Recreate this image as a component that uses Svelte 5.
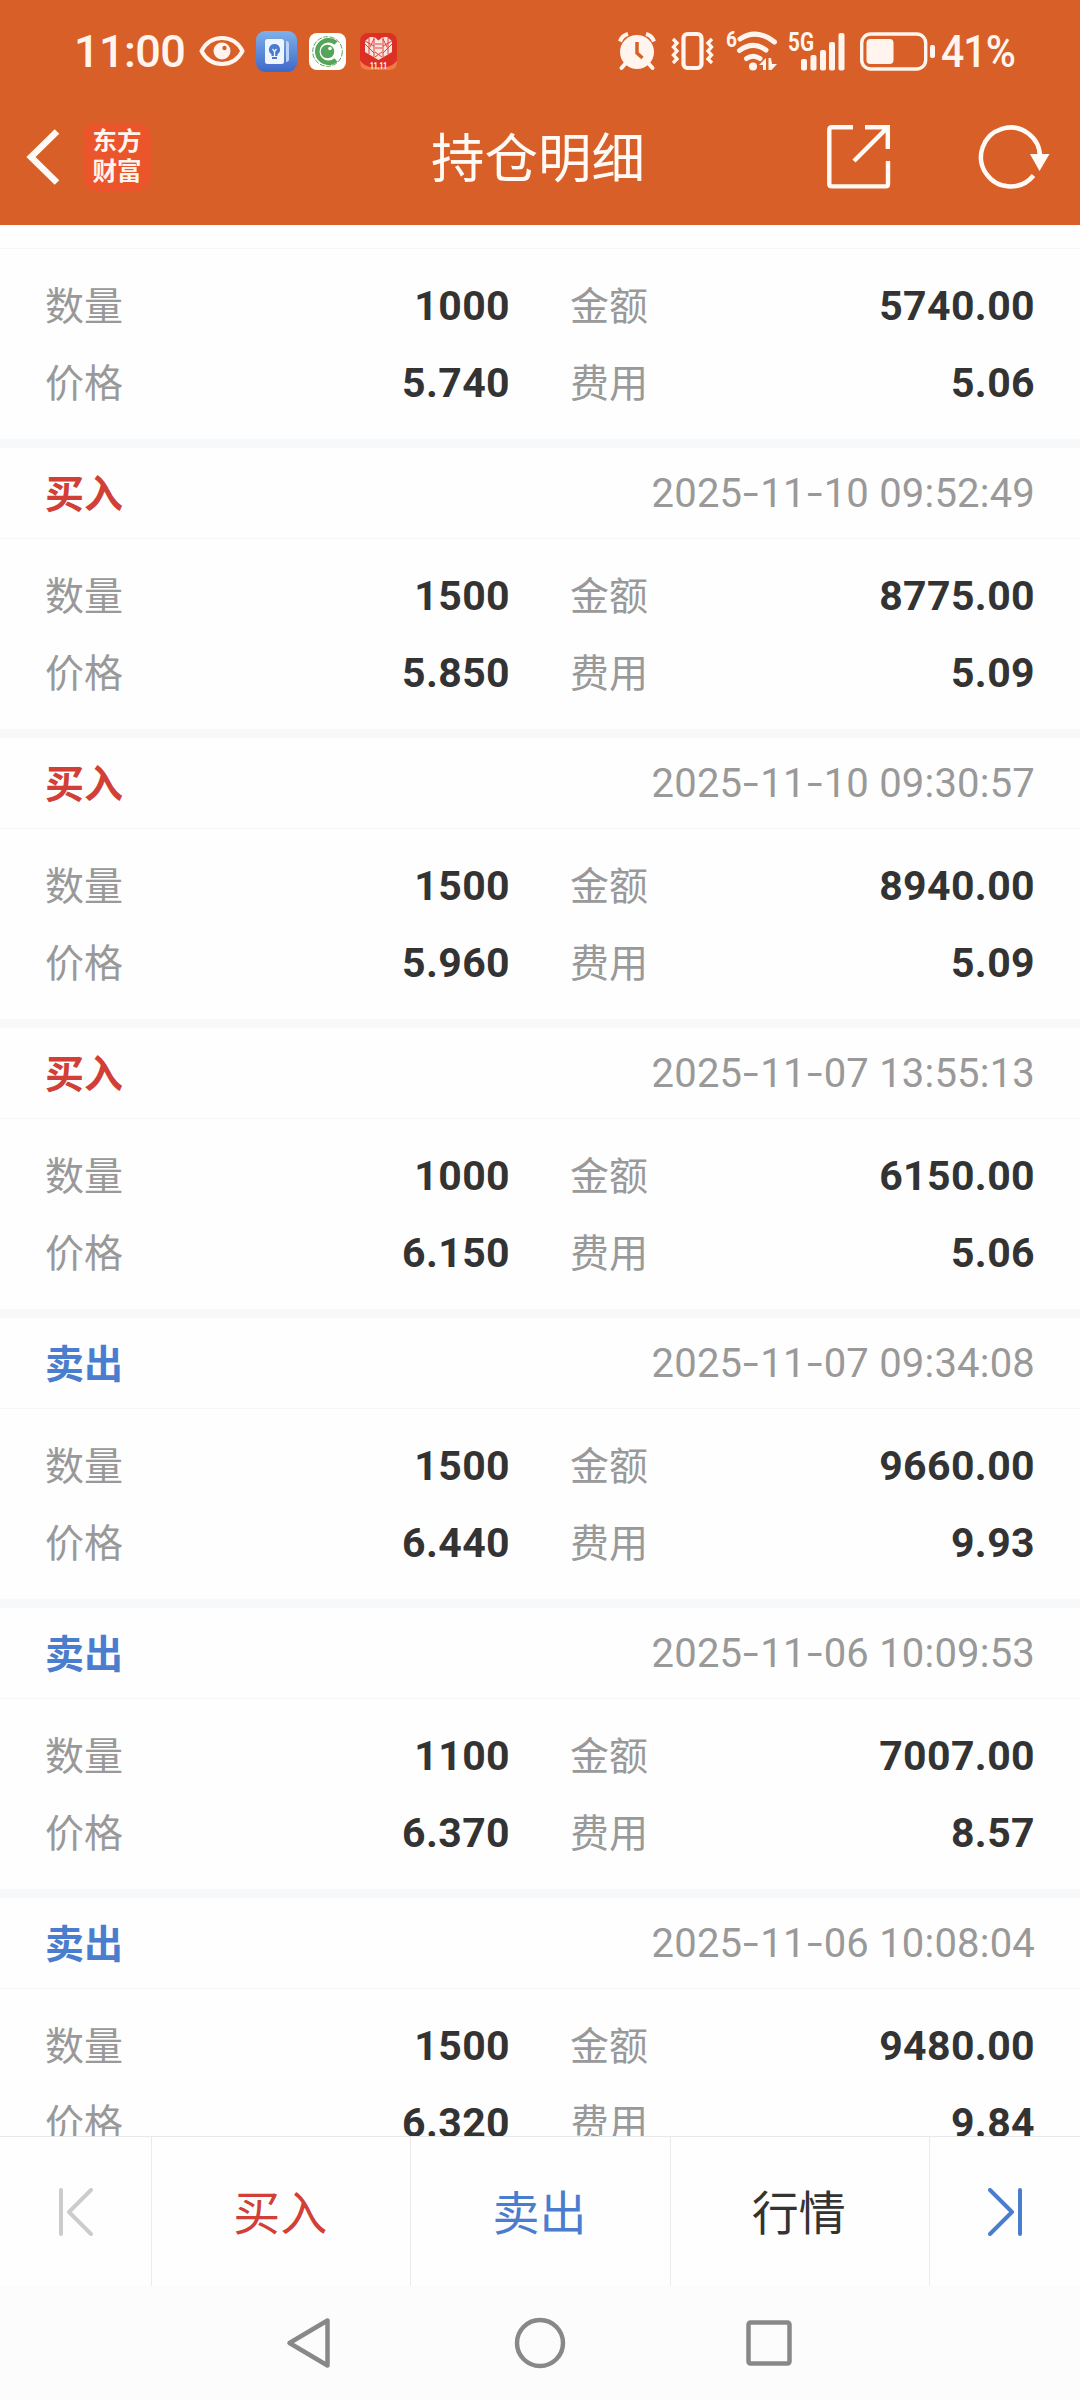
<script lang="ts">
	type Trade = {
		side?: 'buy' | 'sell';
		time?: string;
		count: string;
		amount: string;
		price: string;
		fee: string;
	};

	// the first entry is scrolled past its heading
	const trades: Trade[] = [
		{ count: '1000', amount: '5740.00', price: '5.740', fee: '5.06' },
		{ side: 'buy', time: '2025-11-10 09:52:49', count: '1500', amount: '8775.00', price: '5.850', fee: '5.09' },
		{ side: 'buy', time: '2025-11-10 09:30:57', count: '1500', amount: '8940.00', price: '5.960', fee: '5.09' },
		{ side: 'buy', time: '2025-11-07 13:55:13', count: '1000', amount: '6150.00', price: '6.150', fee: '5.06' },
		{ side: 'sell', time: '2025-11-07 09:34:08', count: '1500', amount: '9660.00', price: '6.440', fee: '9.93' },
		{ side: 'sell', time: '2025-11-06 10:09:53', count: '1100', amount: '7007.00', price: '6.370', fee: '8.57' },
		{ side: 'sell', time: '2025-11-06 10:08:04', count: '1500', amount: '9480.00', price: '6.320', fee: '9.84' }
	];

	const sideLabel = { buy: '买入', sell: '卖出' };
</script>

{#snippet field(label: string, value: string)}
	<div class="field">
		<span class="label">{label}</span>
		<span class="value">{value}</span>
	</div>
{/snippet}

<div class="screen">
	<header>
		<div class="status">
			<div class="status-left">
				<span class="clock">11:00</span>
				<svg class="eye" width="46" height="32" viewBox="0 0 46 32" fill="none">
					<path d="M2.500 16C7 7.500 14.500 3 23 3s16 4.500 20.500 13C39 24.500 31.500 29 23 29S7 24.500 2.500 16Z" stroke="#fff5ee" stroke-width="4" stroke-linejoin="round" />
					<circle cx="23" cy="16" r="8.500" fill="#fff5ee" />
					<circle cx="25.500" cy="13" r="2.200" fill="#d86028" />
				</svg>
				<svg class="app-tip" width="41" height="41" viewBox="0 0 41 41">
					<defs>
						<linearGradient id="tip" x1="0" y1="0" x2="0" y2="1">
							<stop offset="0" stop-color="#7fb0ea" />
							<stop offset="1" stop-color="#3f68c8" />
						</linearGradient>
					</defs>
					<rect width="41" height="41" rx="9" fill="url(#tip)" />
					<path d="M30 10q3 0 3 3v15q0 3-3 3Z" fill="#bdd3f5" />
					<rect x="9" y="8" width="19" height="25" rx="2.500" fill="#eef5ff" />
					<path d="M18.500 13a5.600 5.600 0 0 0-3 10.300V25h6v-1.700A5.600 5.600 0 0 0 18.500 13ZM16 26h5v2h-5Z" fill="#4a7bd0" />
					<path d="M16.500 18l2 2.500 2-2.500M18.500 20.500V25" stroke="#eef5ff" stroke-width="1.300" fill="none" />
				</svg>
				<svg class="app-c" width="37" height="37" viewBox="0 0 37 37" fill="none">
					<rect width="37" height="37" rx="8" fill="#fff" />
					<circle cx="18.500" cy="18.500" r="14.800" stroke="#5aa55c" stroke-width="1" stroke-dasharray="5 1.500" />
					<path d="M27 10a11.300 11.300 0 1 0 0 17" stroke="#55a457" stroke-width="4.500" />
					<circle cx="18.500" cy="18.500" r="6.800" fill="#55a457" />
					<circle cx="21" cy="15.500" r="1.800" fill="#fff" />
				</svg>
				<svg class="app-sale" width="37" height="37" viewBox="0 0 37 37">
					<rect width="37" height="37" rx="8" fill="#dc3025" />
					<path d="M0 27.500q4 5 10 6.500h17q6-1.500 10-6.500V29q0 8-8 8H8q-8 0-8-8Z" fill="#f07a48" />
					<path d="M18.500 27L5 19V8l5-4h4.500l4 3.500 4-3.500H27l5 4v11Z" fill="#fbe4df" />
					<path d="M9 5v16M14 4v20M23 4v20M28 5v16M5 11l9 9M32 11l-9 9M5 8l9 5M32 8l-9 5M15 11h7M15 15h7M10 14l4-8M27 14l-4-8M15 19l7 5M22 19l-7 5" stroke="#dc3025" stroke-width="0.900" />
					<text x="18.500" y="35.500" text-anchor="middle" textLength="17" lengthAdjust="spacingAndGlyphs" class="sale-text">11.11</text>
				</svg>
			</div>
			<div class="status-right">
				<svg class="alarm" width="38" height="38" viewBox="0 0 38 38" fill="none" stroke="#fff5ee">
					<circle cx="19" cy="20" r="17" fill="#fff5ee" stroke="none" />
					<path d="M2 9.500q2-6 8-7.500M36 9.500q-2-6-8-7.500" stroke-width="4" />
					<path d="M7 32l-3.500 4M31 32l3.500 4" stroke-width="4" stroke-linecap="round" />
					<path d="M19 10v11l5.500 5" stroke="#d86028" stroke-width="3.500" />
				</svg>
				<svg class="vibrate" width="43" height="38" viewBox="0 0 43 38" fill="none" stroke="#fff5ee">
					<rect x="12.500" y="2" width="18" height="34" rx="4" stroke-width="4.200" />
					<path d="M2 7l4 4-3.500 4L6 19l-3.500 4L6 27l-4 4M41 7l-4 4 3.500 4-3.500 4 3.500 4-3.500 4 4 4" stroke-width="3.400" />
				</svg>
				<svg class="wifi" width="52" height="40" viewBox="0 0 52 40" fill="none" stroke="#fff5ee">
					<text x="0" y="16" textLength="11" lengthAdjust="spacingAndGlyphs" class="tiny six">6</text>
					<path d="M14 8Q31-3 48.500 11" stroke-width="5" stroke-linecap="round" />
					<path d="M13.500 19.500Q27 9.500 40 19" stroke-width="5" stroke-linecap="round" />
					<path d="M20.500 27.500q6.500-4.500 13.500 0" stroke-width="5" stroke-linecap="round" />
					<circle cx="27" cy="35.500" r="4" fill="#fff5ee" stroke="none" />
					<path d="M33 34l7-7v12h-3v-5ZM42.500 39V27h2.500l1 6h5l-5.500 6Z" fill="#fff5ee" stroke="none" />
				</svg>
				<svg class="signal" width="58" height="39" viewBox="0 0 58 39" fill="#fff5ee">
					<text x="0" y="18.500" textLength="26" lengthAdjust="spacingAndGlyphs" class="tiny">5G</text>
					<rect x="13" y="27" width="6" height="11.500" rx="2" />
					<rect x="22.500" y="23" width="6" height="15.500" rx="2" />
					<rect x="32" y="18" width="6" height="20.500" rx="2" />
					<rect x="41" y="10" width="6" height="28.500" rx="2" />
					<rect x="50.500" y="1" width="6" height="37.500" rx="2" />
				</svg>
				<svg class="battery" width="76" height="39" viewBox="0 0 76 39" fill="none">
					<rect x="1.700" y="2" width="64" height="35" rx="9" stroke="#fff5ee" stroke-width="3.400" />
					<rect x="6.500" y="7" width="27" height="25" rx="4" fill="#fff5ee" />
					<rect x="70" y="13" width="5" height="13" rx="2" fill="#fff5ee" />
				</svg>
				<span class="percent">41%</span>
			</div>
		</div>

		<div class="titlebar">
			<div class="nav-left">
				<svg width="34" height="56" viewBox="0 0 34 56" fill="none" stroke="#fffaf5" stroke-width="6.500">
					<path d="M31 2.500L5 28l26 25.500" />
				</svg>
				<div class="logo"><span>东方</span><span>财富</span></div>
			</div>
			<h1>持仓明细</h1>
			<div class="nav-right">
				<svg width="64" height="64" viewBox="0 0 64 64" fill="none" stroke="#fffaf5" stroke-width="4.400">
					<path d="M26 2.300H5q-2.700 0-2.700 2.700v53.700q0 2.700 2.700 2.700h53.700q2.300 0 2.300-2.700V36" />
					<path d="M38 2.300h22.800V24M60.500 2.500L27 36" />
				</svg>
				<svg width="72" height="66" viewBox="0 0 72 66" fill="none">
					<path d="M55.500 51.500A29.500 29.500 0 1 1 62 33" stroke="#fffaf5" stroke-width="4.500" />
					<path d="M52 30h19.500L61.500 47Z" fill="#fffaf5" />
				</svg>
			</div>
		</div>
	</header>

	<main>
		{#each trades as trade}
			<section>
				<div class="head" class:cut={!trade.side}>
					{#if trade.side && trade.time}
						<span class="side {trade.side}">{sideLabel[trade.side]}</span>
						<time>
							{#each trade.time.split('-') as part, i}{#if i}<span class="dash">-</span>{/if}{part}{/each}
						</time>
					{/if}
				</div>
				<div class="fields">
					{@render field('数量', trade.count)}
					{@render field('金额', trade.amount)}
					{@render field('价格', trade.price)}
					{@render field('费用', trade.fee)}
				</div>
			</section>
		{/each}
	</main>

	<div class="toolbar">
		<div class="tool">
			<svg width="34" height="48" viewBox="0 0 34 48" fill="none" stroke="#ccc" stroke-width="4" stroke-linecap="round" stroke-linejoin="round">
				<path d="M2 2v44M32 2L10 24l22 22" />
			</svg>
		</div>
		<div class="tool text buy">买入</div>
		<div class="tool text sell">卖出</div>
		<div class="tool text">行情</div>
		<div class="tool">
			<svg width="34" height="48" viewBox="0 0 34 48" fill="none" stroke="#4b7dcf" stroke-width="4" stroke-linecap="round" stroke-linejoin="round">
				<path d="M32 2v44M2 2l22 22L2 46" />
			</svg>
		</div>
	</div>

	<nav>
		<svg width="52" height="52" viewBox="0 0 52 52" fill="none" stroke="#888" stroke-width="4.500" stroke-linejoin="round">
			<path d="M42.500 3.500v45L4.500 26Z" />
		</svg>
		<svg width="52" height="52" viewBox="0 0 52 52" fill="none" stroke="#888" stroke-width="4.500">
			<circle cx="26" cy="26" r="23" />
		</svg>
		<svg width="52" height="52" viewBox="0 0 52 52" fill="none" stroke="#888" stroke-width="4.500">
			<rect x="5.500" y="5.500" width="41" height="41" rx="2" />
		</svg>
	</nav>
</div>

<style>
	:global(body) {
		background: #fff;
	}

	.screen {
		display: flex;
		flex-direction: column;
		width: 1080px;
		height: 2400px;
		overflow: hidden;
		background: #fefefe;
		color: #333;
		font-family: Roboto, 'Noto Sans CJK SC', sans-serif;
	}

	header {
		flex: none;
		height: 225px;
		background: #d86028;
		color: #fff5ee;
	}

	.status {
		display: flex;
		justify-content: space-between;
		height: 102px;
		padding: 0 65px 0 74px;
	}

	.status-left,
	.status-right {
		display: flex;
		align-items: center;
	}

	.status svg {
		overflow: visible;
	}

	.clock,
	.percent {
		font-size: 45px;
		font-weight: 500;
		line-height: 1;
	}

	.clock {
		width: 125px;
		letter-spacing: -0.6px;
	}

	.app-tip {
		margin-left: 11px;
	}

	.app-c {
		margin-left: 12px;
	}

	.app-sale {
		margin-left: 14px;
	}

	.sale-text {
		font-size: 9px;
		font-weight: 700;
		fill: #fff;
	}

	.tiny {
		font-size: 25px;
		font-weight: 700;
		fill: #fff5ee;
		stroke: none;
	}

	.tiny.six {
		font-size: 22px;
	}

	.vibrate {
		margin-left: 15px;
	}

	.wifi {
		margin-left: 12px;
	}

	.signal {
		margin-left: 10px;
	}

	.battery {
		margin-left: 14px;
	}

	.percent {
		width: 74px;
		margin-left: 5px;
		letter-spacing: -1px;
		transform: scaleX(0.91);
		transform-origin: left;
	}

	.titlebar {
		display: grid;
		grid-template-columns: 1fr auto 1fr;
		align-items: center;
		height: 110px;
		padding: 0 30px 0 26px;
	}

	.nav-left,
	.nav-right {
		display: flex;
		align-items: center;
	}

	.nav-left {
		gap: 23px;
	}

	.nav-right {
		justify-content: flex-end;
		gap: 87px;
	}

	.logo {
		display: flex;
		flex-direction: column;
		align-items: center;
		justify-content: center;
		width: 68px;
		height: 68px;
		border-radius: 14px;
		background: #eb552b;
		font-size: 24.5px;
		font-weight: 700;
		line-height: 30px;
	}

	h1 {
		margin: 0;
		padding-top: 5px;
		font-size: 53.500px;
		font-weight: 400;
		line-height: 60px;
		color: #fffaf5;
	}

	main {
		flex: 1;
		min-height: 0;
		overflow: hidden;
	}

	section {
		border-bottom: 9px solid #f7f8fa;
	}

	.head {
		display: flex;
		align-items: center;
		justify-content: space-between;
		box-sizing: border-box;
		height: 91px;
		padding: 0 45px;
		border-bottom: 1px solid #f5f6f7;
	}

	.head.cut {
		height: 24px;
	}

	.side {
		padding-bottom: 5px;
		font-size: 39px;
		font-weight: 700;
	}

	.buy {
		color: #d23f36;
	}

	.sell {
		color: #4b7dcf;
	}

	time {
		font-size: 40px;
		font-weight: 400;
		color: #999;
		letter-spacing: 0.2px;
	}

	.dash {
		display: inline-block;
		width: 18px;
		text-align: center;
		transform: scaleX(1.4);
	}

	.fields {
		display: grid;
		grid-template-columns: 464px 464px;
		grid-auto-rows: 77px;
		column-gap: 61px;
		padding: 18px 45px;
	}

	.field {
		display: flex;
		align-items: center;
		justify-content: space-between;
	}

	.label {
		padding-bottom: 5px;
		font-size: 39px;
		color: #999;
	}

	.value {
		margin-right: -1px;
		padding-top: 1px;
		font-size: 41px;
		font-weight: 700;
		letter-spacing: 0.4px;
	}

	.toolbar {
		display: grid;
		grid-template-columns: 151px 1fr 1fr 1fr 151px;
		flex: none;
		height: 150px;
		box-sizing: border-box;
		border-top: 1px solid #e8e8e8;
	}

	.tool {
		display: flex;
		align-items: center;
		justify-content: center;
	}

	.tool.text {
		padding: 0 2px 5px 0;
		font-size: 47px;
	}

	.tool + .tool {
		border-left: 1px solid #ebebeb;
	}

	nav {
		display: flex;
		align-items: center;
		justify-content: center;
		gap: 177px;
		flex: none;
		height: 114px;
		background: #fcfcfc;
	}
</style>
